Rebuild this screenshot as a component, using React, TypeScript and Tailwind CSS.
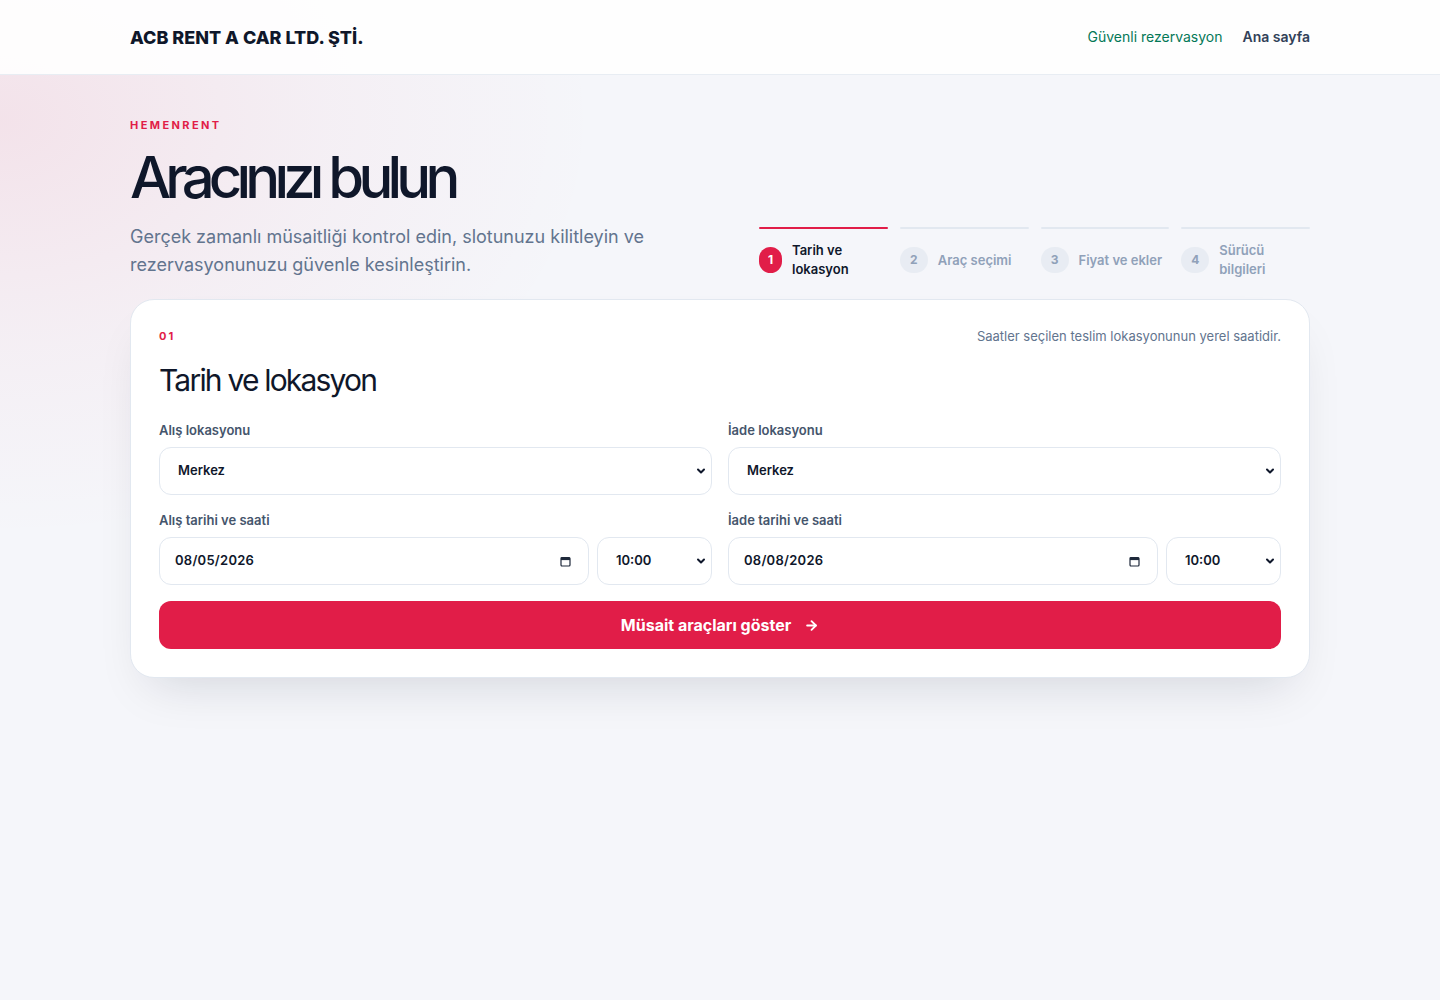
import { ArrowRight, ChevronDown } from 'lucide-react';

const steps = [
  { n: 1, label: 'Tarih ve lokasyon', active: true },
  { n: 2, label: 'Araç seçimi', active: false },
  { n: 3, label: 'Fiyat ve ekler', active: false },
  { n: 4, label: 'Sürücü bilgileri', active: false },
];

function CalendarGlyph() {
  return (
    <svg width="11" height="11" viewBox="0 0 11 11" fill="none">
      <rect x="1" y="1.5" width="9" height="8.5" rx="1" stroke="#1e293b" strokeWidth="1.2" />
      <rect x="1" y="1.5" width="9" height="2.6" fill="#1e293b" />
    </svg>
  );
}

function SelectBox({ value, className = '' }: { value: string; className?: string }) {
  return (
    <div
      className={`flex h-12 items-center justify-between rounded-xl border border-slate-200 bg-white pl-[18px] pr-[4px] text-[13px] font-semibold text-slate-900 ${className}`}
    >
      <span>{value}</span>
      <ChevronDown size={12} strokeWidth={4} className="text-slate-900" />
    </div>
  );
}

function DateBox({ value }: { value: string }) {
  return (
    <div className="flex h-12 flex-1 items-center justify-between rounded-xl border border-slate-200 bg-white pl-[15px] pr-[17px] text-[13px] font-semibold tracking-[0.02em] text-slate-900">
      <span>{value}</span>
      <CalendarGlyph />
    </div>
  );
}

function Field({ label, children }: { label: string; children: React.ReactNode }) {
  return (
    <div className="flex flex-col gap-[7px]">
      <span className="text-[13px] font-semibold leading-5 text-slate-600">{label}</span>
      {children}
    </div>
  );
}

export default function App() {
  return (
    <div className="min-h-screen bg-[#f5f6fa] bg-[radial-gradient(ellipse_600px_420px_at_0%_12%,rgba(225,29,72,0.09),rgba(225,29,72,0.03)_55%,transparent_100%)] font-['Inter',sans-serif] antialiased">
      {/* header */}
      <header className="h-[75px] border-b border-slate-200/80 bg-white/90">
        <div className="mx-auto flex h-full max-w-[1180px] items-center justify-between">
          <span className="text-[18px] font-extrabold text-[#0f172a]">ACB RENT A CAR LTD. ŞTİ.</span>
          <nav className="flex items-center gap-5 text-sm">
            <span className="text-[#047857]">Güvenli rezervasyon</span>
            <span className="font-semibold text-slate-700">Ana sayfa</span>
          </nav>
        </div>
      </header>

      <main className="mx-auto max-w-[1180px] pt-[42px]">
        <div className="flex items-end justify-between">
          <div>
            <p className="text-[11px] font-bold leading-4 tracking-[0.22em] text-[#e11d48]">HEMENRENT</p>
            <h1 className="mt-[15px] text-[58px] font-medium leading-none tracking-[-0.1em] text-[#0f172a]">Aracınızı bulun</h1>
            <p className="mt-[17px] max-w-[540px] text-[18px] leading-7 text-slate-500">
              Gerçek zamanlı müsaitliği kontrol edin, slotunuzu kilitleyin ve rezervasyonunuzu güvenle kesinleştirin.
            </p>
          </div>

          <div className="grid w-[551px] grid-cols-4 gap-3">
            {steps.map((s) => (
              <div key={s.n}>
                <div className={`h-[2px] rounded-full ${s.active ? 'bg-[#e11d48]' : 'bg-slate-200'}`} />
                <div className="mt-3 flex min-h-[38px] items-center gap-[10px]">
                  <span
                    className={`flex h-[26px] shrink-0 items-center justify-center rounded-full text-xs font-bold ${
                      s.active ? 'w-[23px] bg-[#e11d48] text-white' : 'w-[28px] bg-slate-200/70 text-slate-400'
                    }`}
                  >
                    {s.n}
                  </span>
                  <span className={`text-[13px] font-semibold leading-[19px] ${s.active ? 'text-slate-900' : 'text-slate-400'}`}>
                    {s.label}
                  </span>
                </div>
              </div>
            ))}
          </div>
        </div>

        {/* card */}
        <section className="mt-5 rounded-3xl border border-slate-200 bg-white p-7 shadow-[0_24px_50px_-20px_rgba(15,23,42,0.15)]">
          <div className="flex items-start justify-between">
            <div>
              <p className="text-[11px] font-bold leading-4 tracking-[0.2em] text-[#e11d48]">01</p>
              <h2 className="mt-[18px] text-[30px] font-normal leading-9 tracking-[-0.06em] text-[#0f172a]">Tarih ve lokasyon</h2>
            </div>
            <p className="text-[13px] leading-4 text-slate-500">Saatler seçilen teslim lokasyonunun yerel saatidir.</p>
          </div>

          <div className="mt-[22px] grid grid-cols-2 gap-x-4 gap-y-[15px]">
            <Field label="Alış lokasyonu">
              <SelectBox value="Merkez" />
            </Field>
            <Field label="İade lokasyonu">
              <SelectBox value="Merkez" />
            </Field>
            <Field label="Alış tarihi ve saati">
              <div className="flex gap-2">
                <DateBox value="08/05/2026" />
                <SelectBox value="10:00" className="w-[115px]" />
              </div>
            </Field>
            <Field label="İade tarihi ve saati">
              <div className="flex gap-2">
                <DateBox value="08/08/2026" />
                <SelectBox value="10:00" className="w-[115px]" />
              </div>
            </Field>
          </div>

          <button className="mt-4 flex h-12 w-full items-center justify-center gap-[13px] rounded-xl bg-[#e11d48] text-[16px] font-bold text-white">
            Müsait araçları göster
            <ArrowRight size={15} strokeWidth={3} />
          </button>
        </section>
      </main>
    </div>
  );
}
